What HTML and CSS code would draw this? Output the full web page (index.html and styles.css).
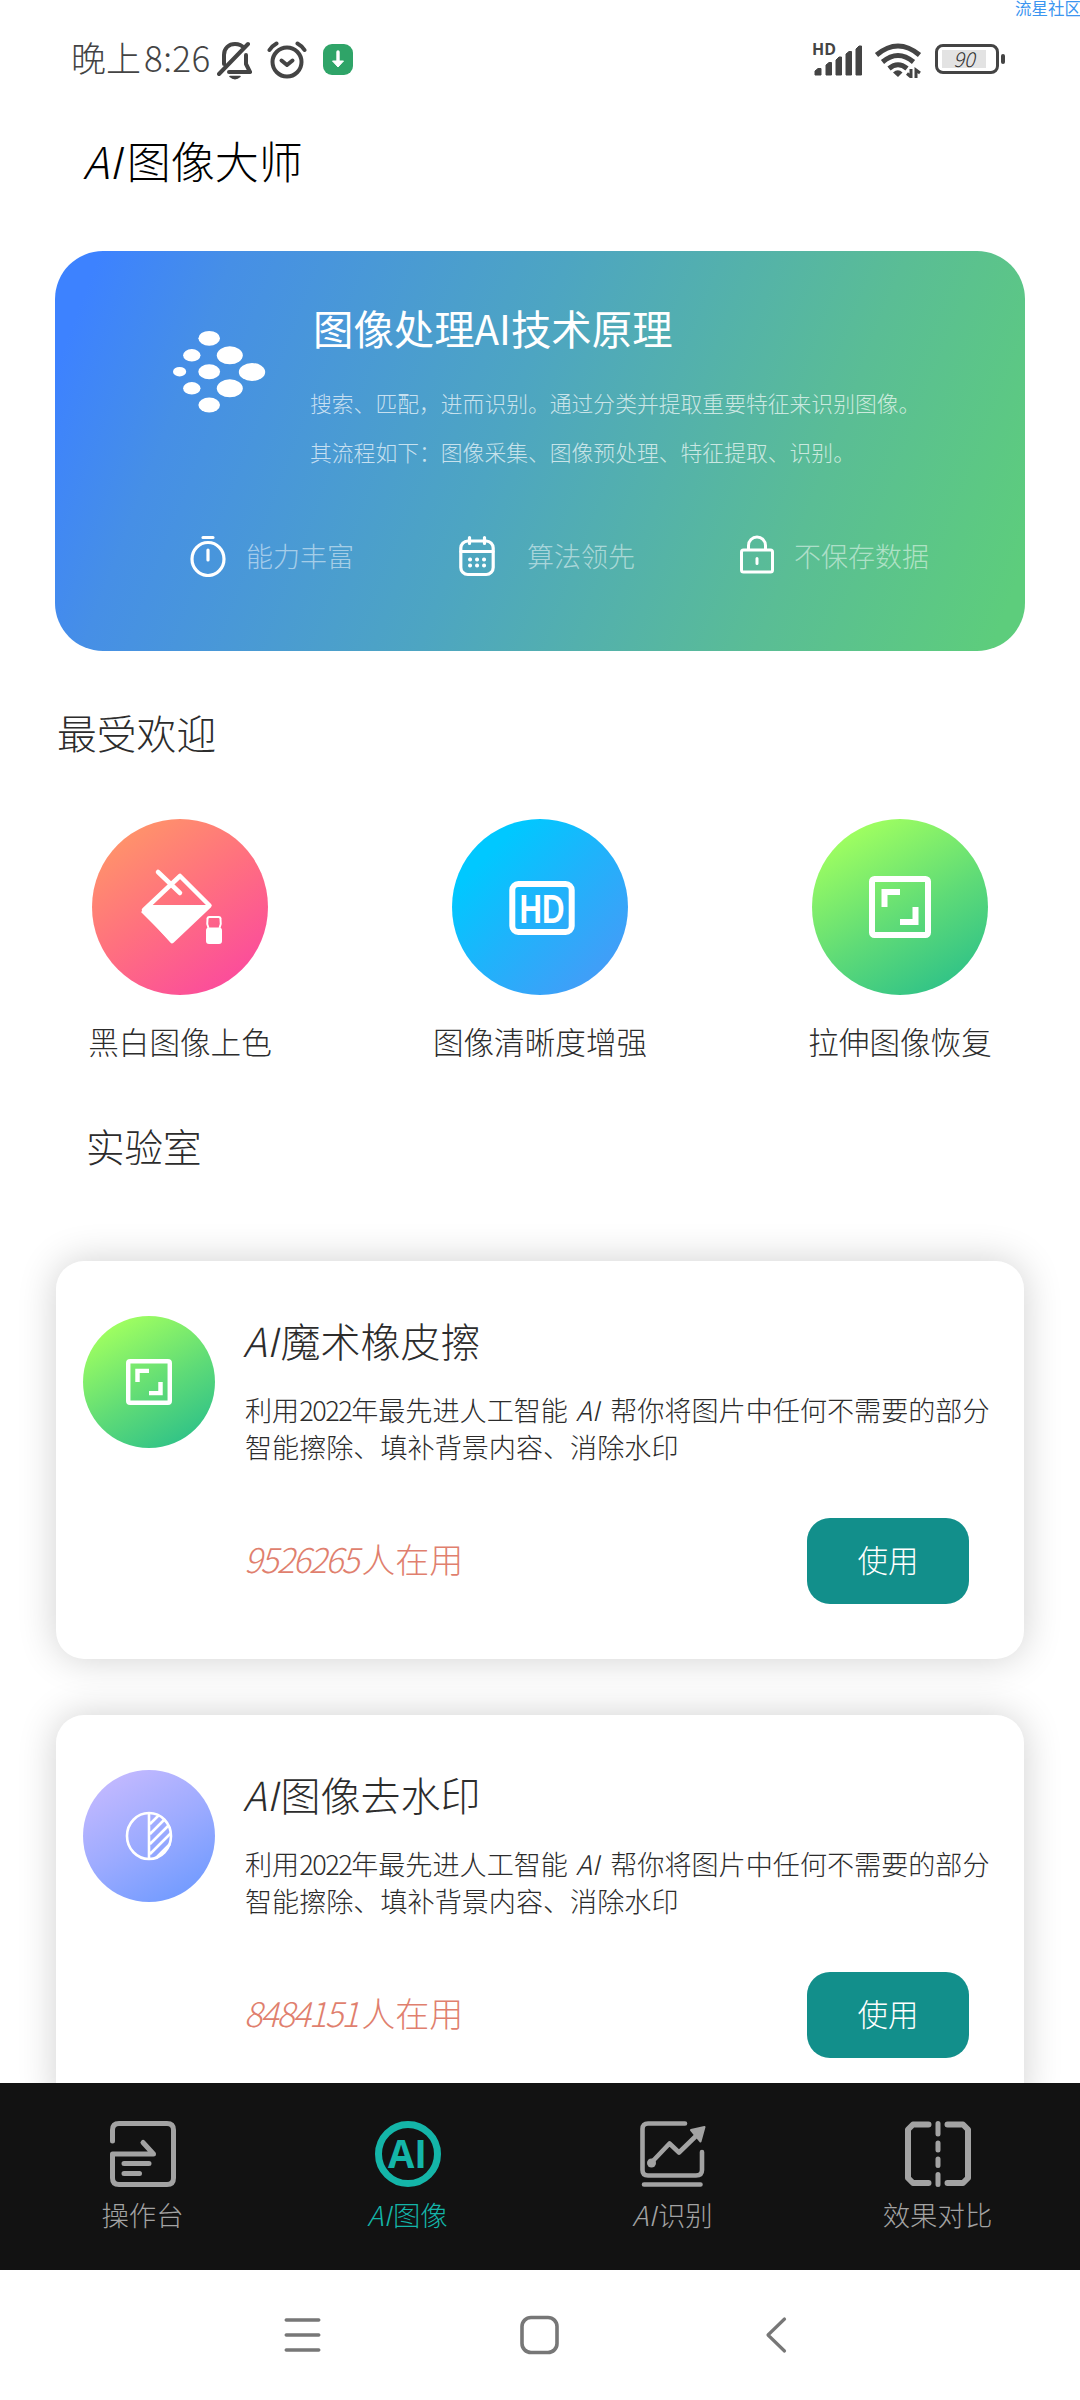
FILE: index.html
```html
<!DOCTYPE html>
<html lang="zh-CN">
<head>
<meta charset="utf-8">
<title>AI图像大师</title>
<link rel="stylesheet" href="styles.css">
</head>
<body>
<svg class="defs" width="0" height="0">
  <symbol id="stretch" viewBox="0 0 62 62">
    <rect x="3" y="3" width="56" height="56" rx="2.500" fill="none" stroke="#fff" stroke-width="6"/>
    <path d="M15.500 31V16H31M31 46H46.500V31" fill="none" stroke="#fff" stroke-width="6"/>
  </symbol>
</svg>
<div class="watermark">流星社区</div>

<header class="status">
  <div class="status-left">
    <span class="clock">晚上<span class="clock-num">8:26</span></span>
    <svg class="bell" width="36" height="40" viewBox="0 0 36 40" fill="none" stroke="#444" stroke-width="4" stroke-linecap="round" stroke-linejoin="round">
      <path d="M7 23V14C7 7 12 3 18 3C22 3 25 4.500 27 7M29 14V23L33 31H12M2 33L31 3"/>
      <path d="M13 35.500H23Q18 40 13 35.500Z" fill="#444" stroke-width="1.500"/>
    </svg>
    <svg class="alarm" width="40" height="38" viewBox="0 0 40 38" fill="none" stroke="#444" stroke-width="4" stroke-linecap="round" stroke-linejoin="round">
      <circle cx="20" cy="21" r="14.500"/>
      <path d="M14.500 19.500L20 24L25.500 19.500"/>
      <path d="M2.500 9Q5 5 9.500 2.500M37.500 9Q35 5 30.500 2.500"/>
    </svg>
    <svg class="download" width="30" height="31" viewBox="0 0 30 31">
      <rect width="30" height="31" rx="9" fill="#2fa468"/>
      <path d="M15 8V19" fill="none" stroke="#fff" stroke-width="3.400" stroke-linecap="round"/>
      <path d="M9.500 17H20.500L15 23Z" fill="#fff" stroke="#fff" stroke-linejoin="round"/>
    </svg>
  </div>
  <div class="status-right">
    <svg class="signal" width="52" height="36" viewBox="0 0 52 36" fill="#444">
      <text x="0" y="13" class="signal-hd" textLength="24" lengthAdjust="spacingAndGlyphs">HD</text>
      <path d="M3 33V29L6 26.500H9V33ZM14 33V23L17 20.500H19.500V33ZM24 33V18L27 15H29.500V33ZM34 33V12L37 9.500H39.500V33ZM44 33V7L47 4H49.500V33Z" stroke="#444" stroke-width="1" stroke-linejoin="round"/>
    </svg>
    <svg class="wifi" width="48" height="36" viewBox="0 0 48 36" fill="none" stroke="#444" stroke-width="5">
      <path d="M2.500 13Q24-5 45.500 13M8.500 20Q24 7 39.500 20M15 26.500Q24 19 33 26.500"/>
      <path d="M19 30.500Q24 26 28.500 30.500L24 35Z" fill="#444" stroke="none"/>
      <path d="M37 27V35L33 31.500M42 36V28L46 31" stroke-width="3"/>
    </svg>
    <span class="battery"><span class="battery-fill">90</span></span>
    <span class="battery-cap"></span>
  </div>
</header>

<main class="page">
  <h1 class="app-title"><i>AI</i>图像大师</h1>

  <section class="banner">
    <div class="banner-top">
      <svg class="banner-logo" width="94" height="84" viewBox="172 330 94 84" fill="#fff">
        <ellipse cx="209.200" cy="338.300" rx="10.800" ry="7.400"/>
        <ellipse cx="191.800" cy="355.300" rx="8.700" ry="6.200"/>
        <ellipse cx="229.800" cy="355.300" rx="13" ry="9"/>
        <ellipse cx="179.600" cy="371.700" rx="6.600" ry="4.800"/>
        <ellipse cx="209.200" cy="371.700" rx="10.900" ry="7.500"/>
        <ellipse cx="252" cy="372" rx="13.200" ry="9"/>
        <ellipse cx="191.800" cy="388.300" rx="8.700" ry="6.200"/>
        <ellipse cx="229.800" cy="388.300" rx="13" ry="9"/>
        <ellipse cx="209.200" cy="405" rx="10.800" ry="7.400"/>
      </svg>
      <div>
        <h2 class="banner-title">图像处理AI技术原理</h2>
        <p class="banner-text">搜索、匹配，进而识别。通过分类并提取重要特征来识别图像。<br>其流程如下：图像采集、图像预处理、特征提取、识别。</p>
      </div>
    </div>
    <div class="features">
      <div class="feature">
        <svg width="36" height="42" viewBox="0 0 36 42" fill="none" stroke="#fff" stroke-width="3.200" stroke-linecap="round">
          <ellipse cx="18" cy="24" rx="16" ry="16.500"/><path d="M18 15V25M13 2.500H23"/>
        </svg>
        <span>能力丰富</span>
      </div>
      <div class="feature feature-wide">
        <svg width="36" height="42" viewBox="0 0 36 42" fill="none" stroke="#fff" stroke-width="3.200" stroke-linecap="round">
          <rect x="1.800" y="6" width="32.400" height="33.500" rx="7"/><path d="M2 16.500H34M10.500 2.500V8.500M25.500 2.500V8.500"/>
          <path d="M11 24.500H11.100M18 24.500H18.100M25 24.500H25.100M11 30.500H11.100M18 30.500H18.100M25 30.500H25.100" stroke-width="4"/>
        </svg>
        <span>算法领先</span>
      </div>
      <div class="feature">
        <svg width="34" height="42" viewBox="0 0 34 42" fill="none" stroke="#fff" stroke-width="3" stroke-linecap="round">
          <rect x="1.500" y="15" width="31" height="22" rx="2"/><path d="M8.500 14.500V10.500A8.500 8.500 0 0 1 25.500 10.500V14.500M17 23.500V28.500"/>
        </svg>
        <span>不保存数据</span>
      </div>
    </div>
  </section>

  <h2 class="section-title">最受欢迎</h2>
  <section class="popular">
    <div class="tool">
      <span class="disc disc-pink">
        <svg width="176" height="176" viewBox="92 819 176 176">
          <path d="M144 910L180 876L209.500 905.500L172 941Z" fill="none" stroke="#fff" stroke-width="4.500" stroke-linejoin="round"/>
          <path d="M149 905H210L172 943L141 912Z" fill="#fff"/>
          <path d="M158 872L180 893" stroke="#fff" stroke-width="4.500" stroke-linecap="round"/>
          <path d="M208.500 928Q206.500 924 207.500 919Q207.500 917 209.500 917H218.500Q220.500 917 220.500 919Q221.500 924 219.500 928" fill="none" stroke="#fff" stroke-width="2"/>
          <rect x="206" y="927.500" width="16" height="16.500" rx="3" fill="#fff"/>
        </svg>
      </span>
      <span class="tool-name">黑白图像上色</span>
    </div>
    <div class="tool">
      <span class="disc disc-blue">
        <svg class="hd-icon" width="66" height="54" viewBox="0 0 66 54">
          <rect x="3.300" y="3" width="59.400" height="48" rx="6" fill="none" stroke="#fff" stroke-width="6"/>
          <text x="10.500" y="42" class="hd-text" textLength="45" lengthAdjust="spacingAndGlyphs">HD</text>
        </svg>
      </span>
      <span class="tool-name">图像清晰度增强</span>
    </div>
    <div class="tool">
      <span class="disc disc-green"><svg width="62" height="62"><use href="#stretch"/></svg></span>
      <span class="tool-name">拉伸图像恢复</span>
    </div>
  </section>

  <h2 class="section-title lab-title">实验室</h2>
  <section class="cards">
    <article class="card">
      <span class="disc disc-small disc-green"><svg width="46" height="46"><use href="#stretch"/></svg></span>
      <div class="card-body">
        <h3 class="card-title"><i>AI</i>魔术橡皮擦</h3>
        <p class="card-text">利用<span class="year">2022</span>年最先进人工智能 <i>AI</i> 帮你将图片中任何不需要的部分<br>智能擦除、填补背景内容、消除水印</p>
        <div class="card-foot"><span class="count"><i class="count-num">9526265</i>人在用</span><button class="use">使用</button></div>
      </div>
    </article>
    <article class="card">
      <span class="disc disc-small disc-violet">
        <svg width="48" height="50" viewBox="0 0 48 50" fill="none" stroke="#fff" stroke-width="2.600">
          <ellipse cx="24" cy="25" rx="22" ry="23"/><path d="M24 2V48M25 13L34 4M25 23L40 8M25 33L44 14M25 43L46 22M31 47L45 33"/>
        </svg>
      </span>
      <div class="card-body">
        <h3 class="card-title"><i>AI</i>图像去水印</h3>
        <p class="card-text">利用<span class="year">2022</span>年最先进人工智能 <i>AI</i> 帮你将图片中任何不需要的部分<br>智能擦除、填补背景内容、消除水印</p>
        <div class="card-foot"><span class="count"><i class="count-num">8484151</i>人在用</span><button class="use">使用</button></div>
      </div>
    </article>
  </section>
</main>

<nav class="tabs">
  <a class="tab">
    <svg width="66" height="66" viewBox="0 0 66 66" fill="none" stroke="#a3a3a3" stroke-width="5" stroke-linecap="round" stroke-linejoin="round">
      <path d="M2.500 20V9Q2.500 2.500 9 2.500H57Q63.500 2.500 63.500 9V57Q63.500 63.500 57 63.500H9Q2.500 63.500 2.500 57V33H43.500L33 21.500M14 42.500H39M14 52.500H29.500"/>
    </svg>
    <span>操作台</span>
  </a>
  <a class="tab tab-active">
    <svg width="66" height="66" viewBox="0 0 66 66">
      <circle cx="33" cy="33" r="29.500" fill="none" stroke="#14b5a8" stroke-width="7"/>
      <text x="13" y="47" class="ai-text" textLength="39" lengthAdjust="spacingAndGlyphs">AI</text>
    </svg>
    <span><i>AI</i>图像</span>
  </a>
  <a class="tab">
    <svg width="66" height="66" viewBox="0 0 66 66" fill="none" stroke="#a3a3a3" stroke-width="4.600" stroke-linecap="round" stroke-linejoin="round">
      <path d="M45 2.500H8Q2.500 2.500 2.500 8V49Q2.500 54.500 8 54.500H56Q62 54.500 62 49V31M4 63.500H60.500"/>
      <path d="M11 42L29.500 22.500L39 31.500L56 15"/>
      <circle cx="11.500" cy="42" r="4.500" fill="#a3a3a3" stroke="none"/>
      <path d="M51 9L64.500 6L60.500 20.500Z" fill="#a3a3a3" stroke-width="2"/>
    </svg>
    <span><i>AI</i>识别</span>
  </a>
  <a class="tab">
    <svg width="66" height="66" viewBox="0 0 66 66" fill="none" stroke="#a3a3a3" stroke-width="6" stroke-linecap="round" stroke-linejoin="round">
      <path d="M23.500 3.500H8L3 8.500V57L8 62H23.500M42.500 3.500H58L63 8.500V57L58 62H42.500"/>
      <path d="M33 2.500V13M33 22V29M33 38V44.500M33 53.500V63.500" stroke-width="5"/>
    </svg>
    <span>效果对比</span>
  </a>
</nav>

<footer class="system">
  <svg width="40" height="40" viewBox="0 0 40 40" fill="none" stroke="#777" stroke-width="3.600" stroke-linecap="round"><path d="M3.300 5H35.700M3.300 20H35.700M3.300 35H35.700"/></svg>
  <svg width="40" height="40" viewBox="0 0 40 40" fill="none" stroke="#777" stroke-width="3.600"><rect x="2" y="2.500" width="35" height="35" rx="9"/></svg>
  <svg width="40" height="40" viewBox="0 0 40 40" fill="none" stroke="#777" stroke-width="3.200" stroke-linecap="round" stroke-linejoin="round"><path d="M27.500 4L11 20L27.500 36"/></svg>
</footer>
</body>
</html>
```
FILE: styles.css
```css
* { box-sizing: border-box; }
body {
  margin: 0;
  width: 1080px;
  height: 2400px;
  display: flex;
  flex-direction: column;
  overflow: hidden;
  position: relative;
  background: #fff;
  color: #2c2c2c;
  font-family: "Noto Sans CJK SC", "Noto Sans", sans-serif;
  font-weight: 300;
}
h1, h2, h3, p { margin: 0; font-weight: 300; }
svg { display: block; flex: none; }
.defs { position: absolute; }
.watermark {
  position: absolute;
  top: -3px;
  left: 1015px;
  width: 65px;
  white-space: nowrap;
  font-size: 16.5px;
  line-height: 22px;
  font-weight: 400;
  color: #3b95f0;
}

/* status bar */
.status {
  height: 104px;
  flex: none;
  display: flex;
  justify-content: space-between;
  padding: 41px 75px 0 71px;
}
.status-left, .status-right { display: flex; align-items: flex-start; }
.clock { width: 146px; font-size: 35px; line-height: 32px; white-space: nowrap; color: #444; }
.clock-num { margin-left: 3px; letter-spacing: .4px; }
.alarm { margin-left: 14px; }
.download { margin: 3px 0 0 16px; }
.status-right { padding-top: 1px; }
.signal { overflow: visible; }
.signal-hd { font: 700 16px "Open Sans", sans-serif; }
.wifi { margin-left: 10px; }
.battery {
  width: 64px;
  height: 30px;
  margin: 2px 0 0 13px;
  padding: 3px 4px;
  border: 3px solid #444;
  border-radius: 8px;
}
.battery-fill {
  display: block;
  width: 44px;
  height: 18px;
  background: #e3e3e3;
  font-size: 20px;
  line-height: 17px;
  text-align: center;
  font-style: italic;
  color: #333;
}
.battery-cap { width: 4px; height: 10px; margin: 12px 0 0 2px; border-radius: 2px; background: #444; }

.page { flex: 1; min-height: 0; overflow: hidden; }
.app-title { padding-left: 83px; font-size: 44px; line-height: 112px; color: #000; }
.app-title i { margin-right: 6px; }

/* banner */
.banner {
  width: 970px;
  height: 400px;
  margin: 35px 0 0 55px;
  padding-top: 47px;
  border-radius: 48px;
  background: linear-gradient(111deg, #3d82ff 4%, #468fe6 16%, #4da5c2 46%, #5abd95 76%, #5dcd7c 97%);
  color: #fff;
}
.banner-top { display: flex; padding-left: 117px; }
.banner-logo { margin: 32px 47px 0 0; }
.banner-title { font-size: 40.4px; line-height: 60px; font-weight: 400; white-space: nowrap; }
.banner-text { margin: 20px 0 0 -3px; font-size: 21.800px; line-height: 49px; white-space: nowrap; color: rgba(255, 255, 255, .7); }
.features { display: grid; grid-template-columns: 269px 281px auto; margin-top: 55px; padding-left: 135px; }
.feature { display: flex; align-items: center; gap: 20px; height: 50px; font-size: 27px; line-height: 46px; color: rgba(255, 255, 255, .52); }
.feature-wide { gap: 32px; }

.section-title { margin: 51px 0 0 57px; font-size: 39.800px; line-height: 60px; }
.lab-title { margin: 54px 0 0 86px; font-size: 38.500px; }

/* tools */
.popular { display: grid; grid-template-columns: repeat(3, 360px); margin-top: 57px; }
.tool { display: flex; flex-direction: column; align-items: center; }
.disc { flex: none; width: 176px; height: 176px; border-radius: 50%; display: flex; align-items: center; justify-content: center; }
.disc-pink { background: linear-gradient(145deg, #ff9569 10%, #ff707f 48%, #fb4a9d 90%); }
.disc-blue { background: linear-gradient(135deg, #00c8ff 20%, #1fb3fb 50%, #4a98f7 95%); }
.disc-green { background: linear-gradient(150deg, #a0ff60 12%, #5fdb77 55%, #28be8a 95%); }
.disc-violet { background: linear-gradient(150deg, #c3b9ff 10%, #9dabff 50%, #6f9aff 92%); }
.hd-icon { margin: 2px 0 0 3px; }
.hd-text { font: 700 40px "Liberation Sans", sans-serif; fill: #fff; }
.tool-name { margin-top: 26px; font-size: 30.600px; line-height: 40px; }

/* cards */
.cards { display: flex; flex-direction: column; gap: 56px; margin: 86px 56px 0; }
.card {
  display: flex;
  gap: 29px;
  height: 398px;
  padding: 49px 0 0 27px;
  border-radius: 28px;
  background: #fff;
  box-shadow: 0 0 38px rgba(0, 0, 0, .19);
}
.disc-small { width: 132px; height: 132px; margin-top: 6px; }
.card-body { flex: 1; }
.card-title { font-size: 40px; line-height: 60px; }
.card-title i { margin: 0 3px 0 -1px; }
.card-text { margin: 21px 0 0 1px; font-size: 27.100px; line-height: 37px; white-space: nowrap; }
.card-text i { margin: 0 5px 0 2px; }
.year { letter-spacing: -1.500px; }
.card-foot { display: flex; justify-content: space-between; align-items: center; margin: 53px 55px 0 0; }
.count { padding-bottom: 4px; font-size: 34px; line-height: 50px; color: #e07f6e; }
.count-num { letter-spacing: -2px; margin-right: 4px; }
.use {
  width: 162px;
  height: 86px;
  padding: 0 0 5px;
  border: 0;
  border-radius: 23px;
  background: #128f8b;
  color: #fff;
  font: inherit;
  font-size: 30.500px;
}

/* bottom tabs */
.tabs { flex: none; height: 187px; padding: 38px 10px 0; display: grid; grid-template-columns: repeat(4, 265px); background: #121212; }
.tab { display: flex; flex-direction: column; align-items: center; gap: 7px; font-size: 27.400px; line-height: 40px; color: #a3a3a3; }
.tab i { margin-right: 2px; }
.tab-active { color: #14b5a8; }
.ai-text { font: 700 39px "Open Sans", sans-serif; fill: #14b5a8; }

.system { flex: none; height: 130px; display: flex; justify-content: center; gap: 197px; padding-top: 45px; }
```
